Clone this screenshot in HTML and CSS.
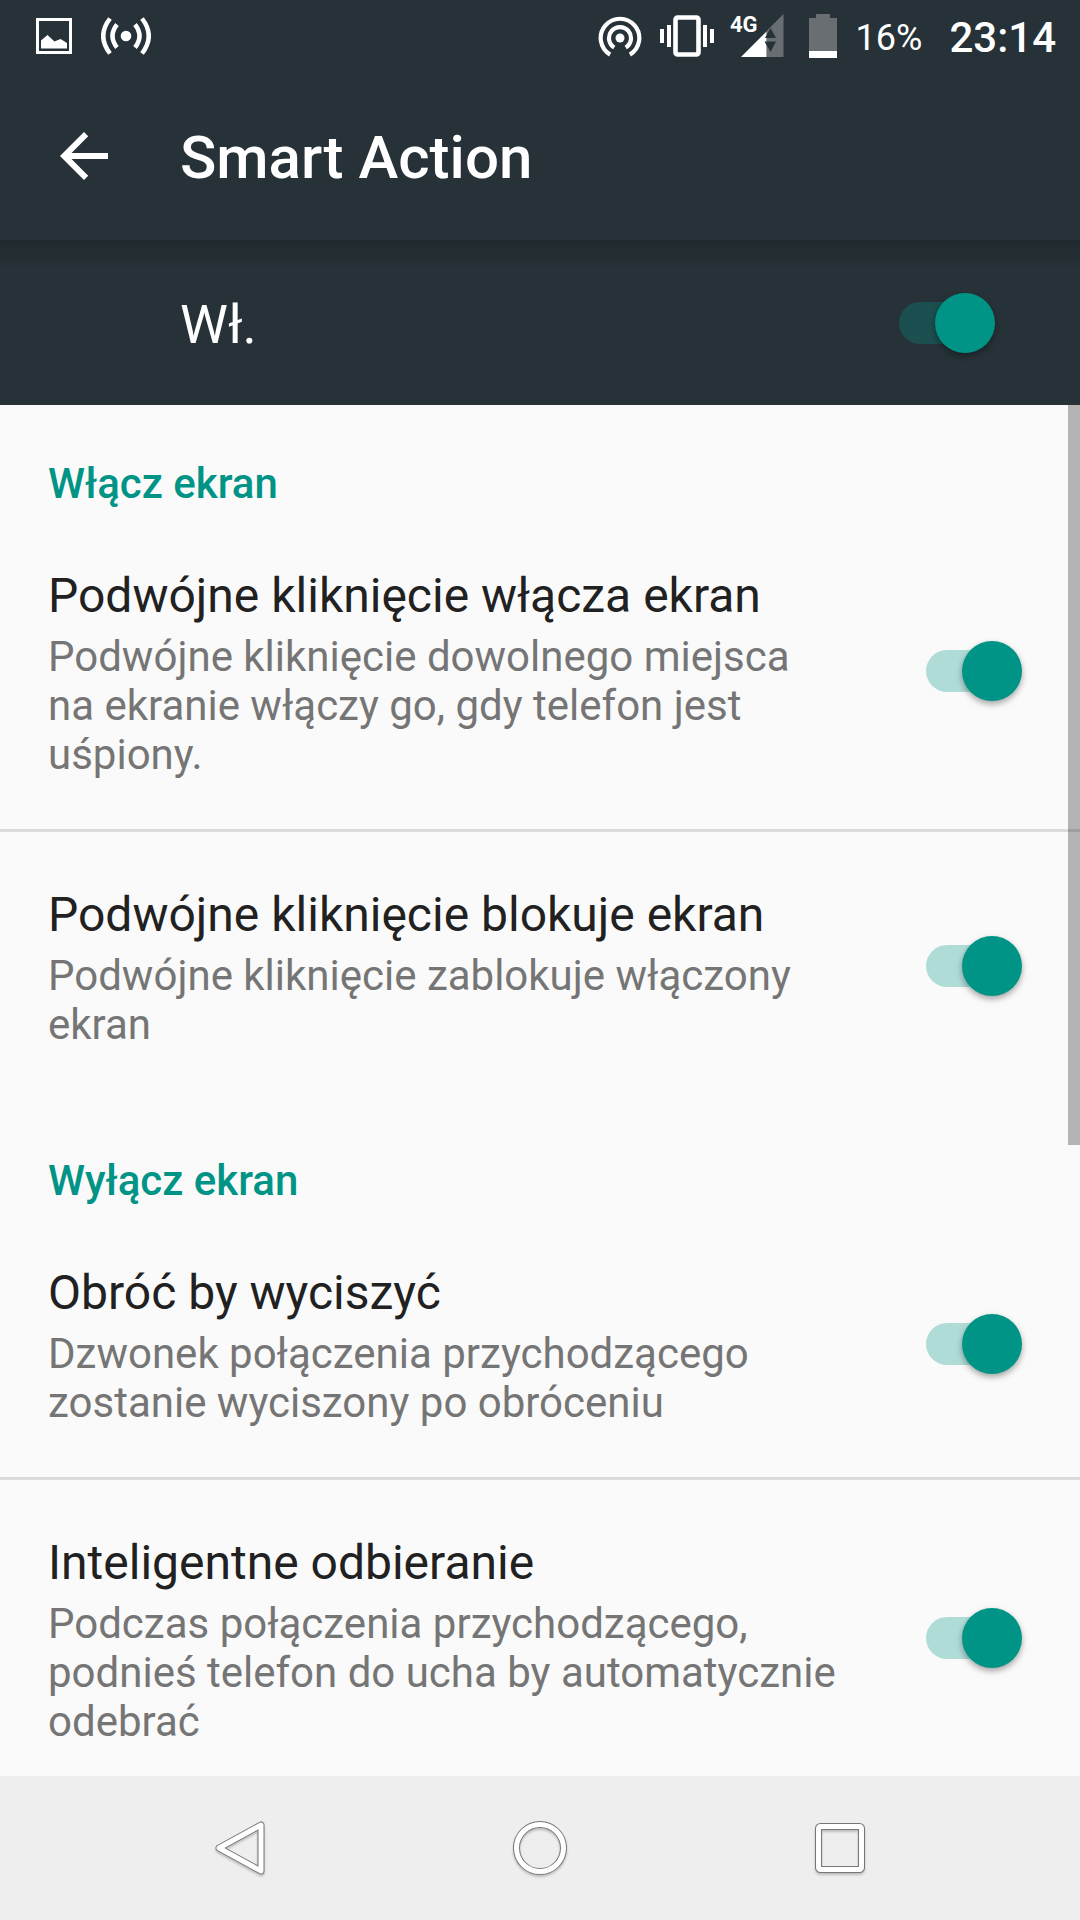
FILE: index.html
```html
<!DOCTYPE html>
<html lang="pl">
<head>
<meta charset="utf-8">
<meta name="viewport" content="width=device-width, initial-scale=1">
<title>Smart Action</title>
<link rel="stylesheet" href="styles.css">
</head>
<body>
<div class="status">
  <div class="status-group notifications">
    <svg width="36" height="36" viewBox="0 0 36 36" aria-hidden="true"><path d="M1.500 1.500H34.500V34.500H1.500Z" fill="none" stroke="#fff" stroke-width="3"/><path d="M5 30.500V22.500L11.500 17L18.500 23.500L24.500 21L31 25V30.500Z" fill="#fff"/></svg>
    <svg width="50" height="38" viewBox="0 0 50 38" aria-hidden="true"><circle cx="25" cy="19" r="5.300" fill="#fff"/><path d="M16 7.500Q7 19 16 30.500M34 7.500Q43 19 34 30.500M9 1.500Q-4.500 19 9 36.500M41 1.500Q54.500 19 41 36.500" fill="none" stroke="#fff" stroke-width="4.500"/></svg>
  </div>
  <div class="status-group indicators">
    <svg width="44" height="42" viewBox="0 0 44 42" aria-hidden="true"><circle cx="22" cy="23" r="4.500" fill="#fff"/><path d="M16.300 32.500A11 11 0 1 1 27.700 32.500M12.100 39.600A19.300 19.300 0 1 1 31.900 39.600" fill="none" stroke="#fff" stroke-width="4.200"/></svg>
    <svg class="vibrate" width="54" height="42" viewBox="0 0 54 42" aria-hidden="true"><rect x="15.500" y="2.500" width="23" height="37" rx="2" fill="none" stroke="#fff" stroke-width="4.600"/><path d="M0 14H4V28H0ZM7 10H11V32H7ZM43 10H47V32H43ZM50 14H54V28H50Z" fill="#fff"/></svg>
    <svg class="signal" width="54" height="44" viewBox="0 0 54 44" role="img" aria-label="4G"><path d="M53.500 0V43H36.500V17Z" fill="#696e72"/><path d="M11 43L36.500 17.500V43Z" fill="#fff"/><path d="M35 24L40.500 14L46 24ZM34.500 27.500H46L40.500 38Z" fill="#263238"/><text class="signal-label" x="0" y="18">4G</text></svg>
    <svg class="battery" width="30" height="44" viewBox="0 0 30 44" aria-hidden="true"><path d="M8 0H22V4H29V44H1V4H8Z" fill="#696e72"/><path d="M1 37H29V44H1Z" fill="#fff"/></svg>
    <span class="percent">16%</span>
    <time class="clock">23:14</time>
  </div>
</div>
<header class="toolbar">
  <button class="back" type="button" aria-label="Wstecz"><svg width="48" height="48" viewBox="0 0 48 48" aria-hidden="true"><path d="M24 0L28.200 4.200L11.500 21H48V27H11.500L28.200 43.800L24 48L0 24Z" fill="#fff"/></svg></button>
  <h1>Smart Action</h1>
</header>
<div class="master">
  <label for="master">Wł.</label>
  <input class="switch dark" id="master" type="checkbox" role="switch" checked>
</div>
<div class="content">
  <main class="scroller">
    <section>
      <h2>Włącz ekran</h2>
      <div class="item">
        <label for="wake"><span class="title">Podwójne kliknięcie włącza ekran</span><span class="summary">Podwójne kliknięcie dowolnego miejsca na ekranie włączy go, gdy telefon jest uśpiony.</span></label>
        <input class="switch" id="wake" type="checkbox" role="switch" checked>
      </div>
      <div class="item">
        <label for="lock"><span class="title">Podwójne kliknięcie blokuje ekran</span><span class="summary">Podwójne kliknięcie zablokuje włączony ekran</span></label>
        <input class="switch" id="lock" type="checkbox" role="switch" checked>
      </div>
    </section>
    <section>
      <h2>Wyłącz ekran</h2>
      <div class="item">
        <label for="mute"><span class="title">Obróć by wyciszyć</span><span class="summary">Dzwonek połączenia przychodzącego zostanie wyciszony po obróceniu</span></label>
        <input class="switch" id="mute" type="checkbox" role="switch" checked>
      </div>
      <div class="item">
        <label for="answer"><span class="title">Inteligentne odbieranie</span><span class="summary">Podczas połączenia przychodzącego, podnieś telefon do ucha by automatycznie odebrać</span></label>
        <input class="switch" id="answer" type="checkbox" role="switch" checked>
      </div>
    </section>
  </main>
  <div class="scrollbar"></div>
</div>
<nav class="navbar" aria-label="System">
  <button type="button" aria-label="Wstecz"><svg width="64" height="64" viewBox="0 0 64 64" aria-hidden="true"><path class="edge" d="M11 32L53 9V55Z"/><path class="core" d="M11 32L53 9V55Z"/></svg></button>
  <button type="button" aria-label="Ekran główny"><svg width="64" height="64" viewBox="0 0 64 64" aria-hidden="true"><circle class="edge" cx="32" cy="32" r="23.500"/><circle class="core" cx="32" cy="32" r="23.500"/></svg></button>
  <button type="button" aria-label="Ostatnie"><svg width="64" height="64" viewBox="0 0 64 64" aria-hidden="true"><rect class="edge" x="10.500" y="10.500" width="43" height="43" rx="2"/><rect class="core" x="10.500" y="10.500" width="43" height="43" rx="2"/></svg></button>
</nav>
</body>
</html>
```
FILE: styles.css
```css
* { box-sizing: border-box; }
body {
  margin: 0;
  height: 100vh;
  display: flex;
  flex-direction: column;
  background: #fafafa;
  color: #212121;
  font-family: Roboto, "Noto Sans", sans-serif;
}
svg { display: block; }
button { border: 0; padding: 0; background: none; }

.status {
  display: flex;
  justify-content: space-between;
  height: 72px;
  flex: none;
  padding: 0 24px 0 36px;
  background: #263238;
  color: #fff;
}
.status-group { display: flex; align-items: center; }
.notifications { gap: 29px; }
.indicators { gap: 18px; }
.signal { overflow: visible; margin-left: -2px; }
.signal-label { font-size: 22px; font-weight: 700; fill: #fff; }
.battery { margin-left: 6px; }
.percent { padding-top: 3px; font-size: 36px; line-height: 72px; }
.clock { margin-left: 9px; padding-top: 3px; font-size: 42px; font-weight: 500; line-height: 72px; }

.toolbar {
  display: flex;
  align-items: center;
  gap: 72px;
  height: 168px;
  flex: none;
  padding: 0 60px;
  background: #263238;
}
h1 { margin: 0; padding-top: 4px; color: #fff; font-size: 60px; font-weight: 500; line-height: 72px; }

.master {
  display: flex;
  align-items: center;
  justify-content: space-between;
  height: 165px;
  flex: none;
  padding: 0 85px 0 180px;
  background: linear-gradient(#20292e, #263238 30px);
  color: #fff;
  font-size: 54px;
}
.master label { padding-top: 4px; }

.content { position: relative; flex: 1; min-height: 0; }
.scroller { height: 100%; overflow-y: auto; scrollbar-width: none; }
.scrollbar {
  position: absolute;
  top: 0;
  right: 0;
  width: 12px;
  height: 54%;
  background: rgba(0, 0, 0, .28);
}

section + section { margin-top: 3px; }
h2 {
  margin: 0;
  padding: 54px 48px 5px;
  color: #009486;
  font-size: 42px;
  font-weight: 500;
  line-height: 49px;
}
.item {
  display: flex;
  align-items: center;
  justify-content: space-between;
  gap: 84px;
  padding: 0 58px 0 48px;
}
.item + .item { border-top: 3px solid #dcdcdc; }
.item label { padding: 55px 0 50px; }
.title { display: block; font-size: 48px; line-height: 56px; }
.summary { display: block; margin-top: 8px; color: #757575; font-size: 42px; line-height: 49px; }

.switch {
  appearance: none;
  display: flex;
  align-items: center;
  justify-content: flex-end;
  flex: none;
  width: 96px;
  height: 60px;
  margin: 0;
}
.switch::before {
  content: "";
  width: 84px;
  height: 42px;
  margin-right: -48px;
  border-radius: 21px;
  background: #b0dcd8;
}
.switch.dark::before { background: #1b4f50; }
.switch::after {
  content: "";
  flex: none;
  width: 60px;
  height: 60px;
  border-radius: 50%;
  background: #009486;
  box-shadow: 0 3px 6px rgba(0, 0, 0, .35);
}

.navbar {
  display: flex;
  height: 144px;
  flex: none;
  padding: 0 90px;
  background: #eee;
}
.navbar button { flex: 1; display: flex; align-items: center; justify-content: center; }
.navbar svg { filter: drop-shadow(0 2px 1px rgba(0, 0, 0, .2)); }
.edge, .core { fill: none; stroke-linejoin: round; }
.edge { stroke: #777; stroke-width: 7; }
.core { stroke: #fff; stroke-width: 5; }
```
